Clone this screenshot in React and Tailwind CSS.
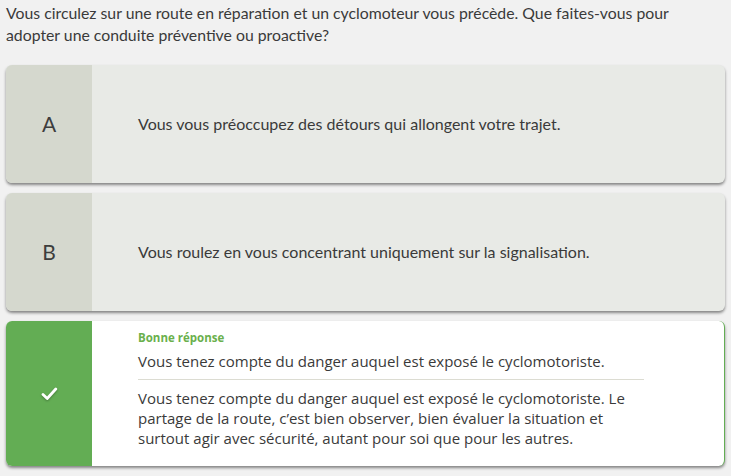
import React from 'react';

const options = [
  { letter: 'A', text: 'Vous vous préoccupez des détours qui allongent votre trajet.' },
  { letter: 'B', text: 'Vous roulez en vous concentrant uniquement sur la signalisation.' },
];

const OptionCard = ({ letter, text }) => (
  <div className="flex h-[118px] rounded-md bg-[#e8eae6] shadow-[0_2px_3px_rgba(0,0,0,0.45)] overflow-hidden">
    <div className="w-[86px] shrink-0 flex items-center justify-center bg-[#d5d8ce] text-[21px] text-[#3d3d3d]">
      {letter}
    </div>
    <div className="flex items-center pl-[46px] text-[16px] text-[#3a3a3a]">{text}</div>
  </div>
);

const App = () => {
  return (
    <div className="min-h-screen bg-[#f1f1f1] px-[6px] pt-[2px] font-['Lato',sans-serif]">
      <p className="text-[15.8px] leading-[22px] text-[#3a3a3a] pr-[40px]">
        Vous circulez sur une route en réparation et un cyclomoteur vous précède. Que faites-vous pour adopter une conduite préventive ou proactive?
      </p>

      <div className="mt-[19px] flex flex-col gap-[10px]">
        {options.map((opt) => (
          <OptionCard key={opt.letter} {...opt} />
        ))}

        {/* Correct answer */}
        <div className="flex rounded-md bg-white border-r border-[#63ad54] shadow-[0_2px_3px_rgba(0,0,0,0.45)] overflow-hidden">
          <div className="w-[86px] shrink-0 flex items-center justify-center bg-[#63ad54]">
            <svg className="w-[17px] h-[14px] drop-shadow-[0_1px_1px_rgba(0,0,0,0.3)]" viewBox="0 0 17 14" fill="none">
              <path d="M2 7.5l4.2 4 8.6-9.5" stroke="white" strokeWidth="2.8" strokeLinecap="round" strokeLinejoin="round" />
            </svg>
          </div>
          <div className="pl-[46px] pr-[80px] pt-[10px] pb-[18px] font-['Open_Sans',sans-serif] text-[#3a3a3a]">
            <p className="text-[11.5px] font-bold text-[#6ab04c] leading-[14px]">Bonne réponse</p>
            <p className="mt-[6px] text-[15px] leading-[20px] pb-[8px] border-b border-[#dcdcd2]">
              Vous tenez compte du danger auquel est exposé le cyclomotoriste.
            </p>
            <p className="mt-[8px] text-[15px] leading-[20px]">
              Vous tenez compte du danger auquel est exposé le cyclomotoriste. Le partage de la route, c’est bien observer, bien évaluer la situation et surtout agir avec sécurité, autant pour soi que pour les autres.
            </p>
          </div>
        </div>
      </div>
    </div>
  );
};

export default App;
